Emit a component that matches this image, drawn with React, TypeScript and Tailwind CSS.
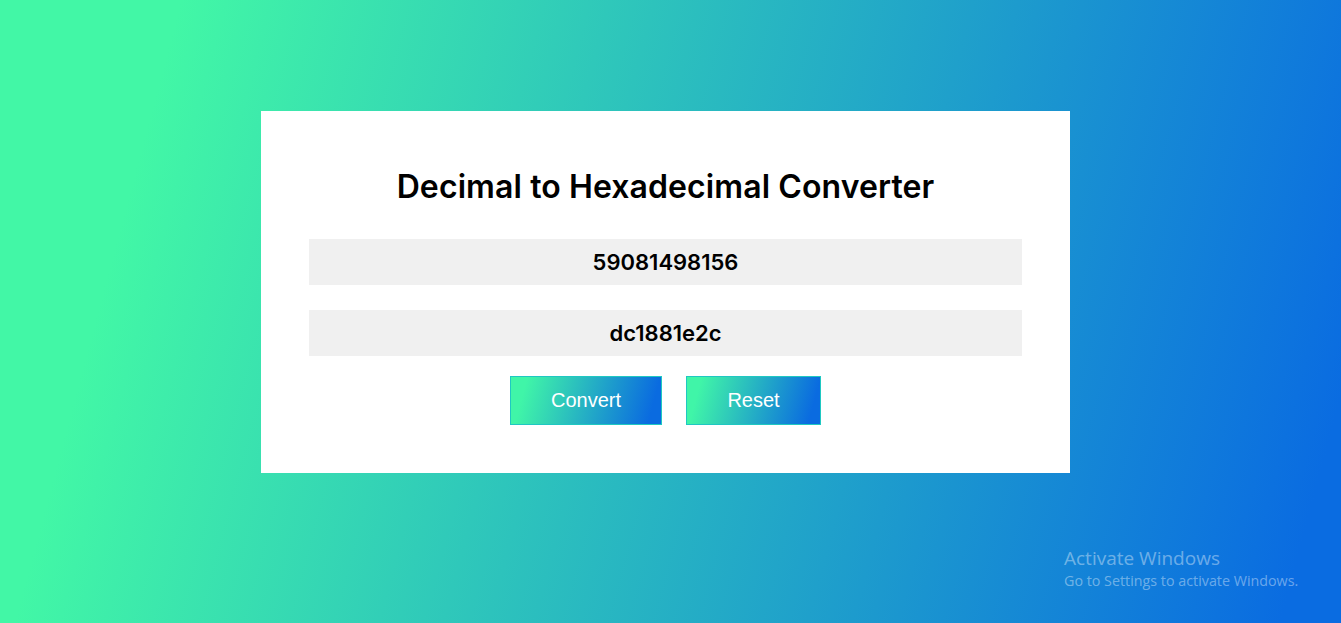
import { useState } from "react";

const App = () => {
  const [decimal, setDecimal] = useState<string>("59081498156");
  const [hex, setHex] = useState<string>("dc1881e2c");

  const convert = () => {
    const n = parseInt(decimal, 10);
    setHex(isNaN(n) ? "" : n.toString(16));
  };

  const reset = () => {
    setDecimal("");
    setHex("");
  };

  return (
    <div className="relative w-full h-[623px] overflow-hidden flex justify-center items-start pt-[111px] pr-[10px] bg-[linear-gradient(105deg,#42f7a6_12%,#0a6ce1_96%)] font-['Liberation_Sans',Arial,sans-serif]">
      <div className="bg-white w-[809px] h-[362px] px-12 pt-[56px] flex flex-col items-center">
        <h1 className="text-[32px] leading-10 font-semibold text-black tracking-[0.1px] font-['Inter','Noto_Sans',sans-serif]">
          Decimal to Hexadecimal Converter
        </h1>
        <input
          value={decimal}
          onChange={(e) => setDecimal(e.target.value)}
          className="mt-[32px] w-full h-[46px] bg-[#f0f0f0] text-center text-[22px] font-semibold text-black outline-none font-['Inter','Noto_Sans',sans-serif]"
        />
        <input
          value={hex}
          readOnly
          className="mt-[25px] w-full h-[46px] bg-[#f0f0f0] text-center text-[22px] font-semibold text-black outline-none font-['Inter','Noto_Sans',sans-serif]"
        />
        <div className="mt-5 flex gap-6">
          <button
            onClick={convert}
            className="w-[152px] h-[49px] border border-[#1fc8c2] text-white text-xl leading-none pb-[2px] bg-[linear-gradient(105deg,#40f5a8_10%,#0a6be0_92%)]"
          >
            Convert
          </button>
          <button
            onClick={reset}
            className="w-[135px] h-[49px] border border-[#1fc8c2] text-white text-xl leading-none pb-[2px] bg-[linear-gradient(105deg,#40f5a8_10%,#0a6be0_92%)]"
          >
            Reset
          </button>
        </div>
      </div>

      <div className="absolute left-[1064px] top-[546px] text-white/40 font-['Open_Sans',sans-serif]">
        <div className="text-[19px] leading-6">Activate Windows</div>
        <div className="text-[14.3px] leading-5 mt-[1px]">Go to Settings to activate Windows.</div>
      </div>
    </div>
  );
};

export default App;
